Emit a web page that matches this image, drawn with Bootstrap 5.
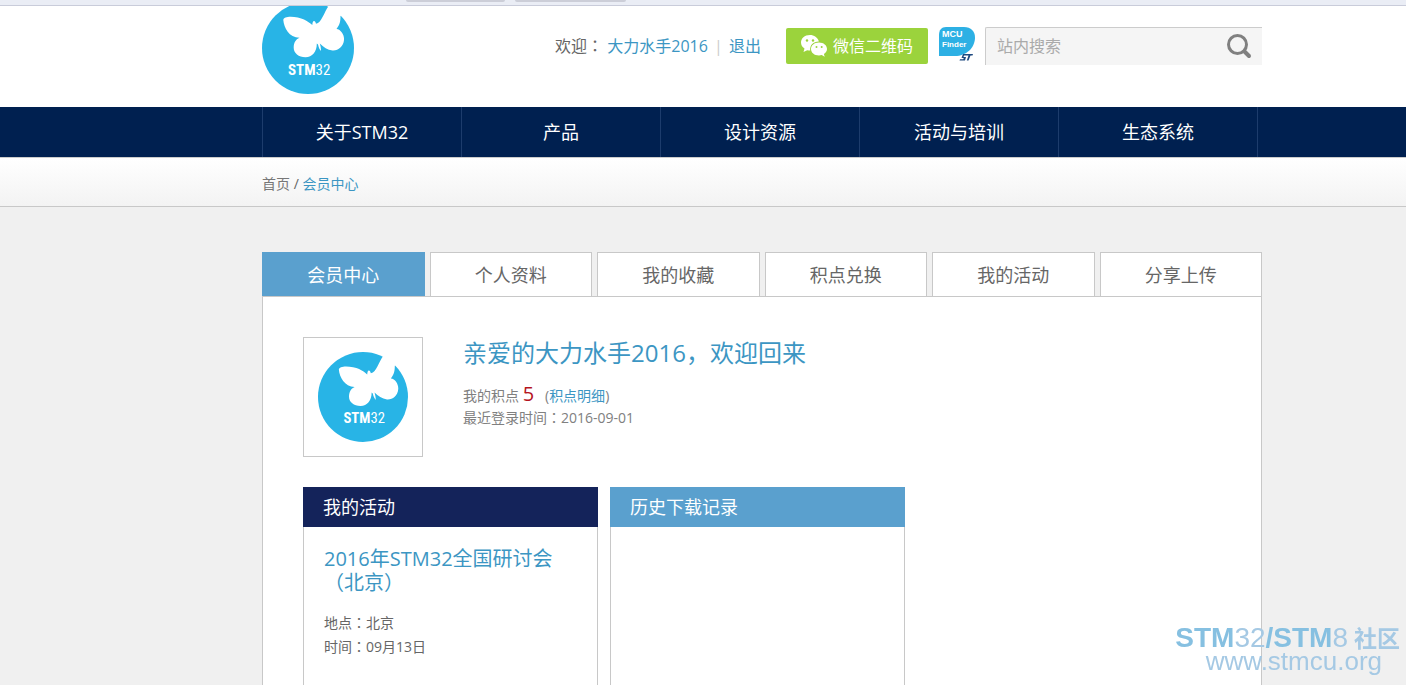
<!DOCTYPE html>
<html lang="zh-CN">
<head>
<meta charset="utf-8">
<meta name="viewport" content="width=device-width, initial-scale=1">
<title>会员中心 - STM32</title>
<link rel="stylesheet" href="https://cdn.jsdelivr.net/npm/bootstrap@5.3.0/dist/css/bootstrap.min.css">
<style>
  body { font-family: "Open Sans", "Noto Sans CJK SC", sans-serif; font-size: 14px; line-height: 22px; color: #666; background: #f0f0f0; }
  a { color: #3c96c3; text-decoration: none; }
  .punct { font-family: "Noto Sans CJK TC", sans-serif; line-height: 1; }
  .wrap { padding-left: 262px; padding-right: 144px; }
  .top-strip { height: 6px; background: #eaedf5; border-bottom: 1px solid #c9ccda; padding-left: 406px; gap: 10px; }
  .top-strip span { height: 2px; background: #ccced8; border-radius: 0 0 2px 2px; width: 99px; }
  .top-strip span + span { width: 111px; }
  .site-header { background: #fff; height: 101px; }
  .header-tools { padding-top: 21px; font-size: 16px; }
  .welcome .bar { color: #ccc; margin: 0 2px; }
  .btn-wechat { width: 142px; height: 36px; background: #9bd33c; color: #fff; font-size: 16px; border: 0; border-radius: 2px; padding: 0; margin-left: 25px; }
  .btn-wechat:hover { background: #8cc433; color: #fff; }
  .mcu { margin: 0 10px; padding-bottom: 2px; }
  .search-box { width: 277px; height: 38px; background: #f5f5f5; border-top: 1px solid #ccc; border-left: 1px solid #ccc; border-radius: 2px 0 0 0; padding: 0 9px 2px 11px; }
  .search-box input { background: transparent; border: 0; padding: 0; font-size: 16px; color: #666; box-shadow: none; }
  .search-box input:focus { background: transparent; box-shadow: none; }
  .search-box input::placeholder { color: #aaa; }
  .main-nav { background: #002050; }
  .main-nav ul { border-left: 1px solid #1d3c6c; margin-right: 4px; }
  .main-nav .nav-link { height: 50px; line-height: 50px; padding: 0; color: #fff; font-size: 18px; border-right: 1px solid #1d3c6c; }
  .crumbs { height: 50px; padding-top: 3px; background: linear-gradient(#fff, #f3f3f3); border-top: 1px solid #ccc; border-bottom: 1px solid #c8c8c8; }
  .crumbs a:first-child { color: #777; }
  .tabs { gap: 5px; padding-top: 45px; }
  .tabs .nav-link { height: 44px; line-height: 44px; padding: 0; border: 1px solid #c8c8c8; border-bottom: 0; border-radius: 0; background: #fff; color: #666; font-size: 18px; }
  .tabs .nav-link.active { background: #5aa0ce; border-color: #5aa0ce; color: #fff; }
  .panel { background: #fff; border: 1px solid #c8c8c8; border-bottom: 0; padding: 40px 40px 0; }
  .avatar { width: 120px; height: 120px; border: 1px solid #c8c8c8; }
  .profile { gap: 40px; color: #808080; }
  .profile h1 { font-size: 24px; line-height: 32px; color: #3c96c3; font-weight: 400; margin-bottom: 15px; }
  .points { font-size: 20px; line-height: 1; color: #b4141e; }
  .boxes { gap: 12px; padding-top: 30px; }
  .box { width: 295px; }
  .box h2 { height: 40px; line-height: 40px; font-size: 18px; font-weight: 400; color: #fff; padding-left: 20px; margin: 0; }
  .box-dark h2 { background: #14235a; }
  .box-light h2 { background: #5aa0ce; }
  .box-body { border: 1px solid #c8c8c8; border-width: 0 1px; padding: 20px; }
  .box h3 { font-size: 20px; line-height: 24px; font-weight: 400; margin-bottom: 16px; }
  .box p { line-height: 24px; margin: 0; }
  .watermark { right: 6px; bottom: 14px; font-family: "Liberation Sans", "Noto Sans CJK SC", sans-serif; font-size: 28px; line-height: 22px; color: #a5c9e4; pointer-events: none; white-space: nowrap; }
  .watermark b { color: #86c0e1; }
  .watermark .cjk { font-size: 23px; font-weight: 700; line-height: 1; margin-left: 6px; }
  .watermark .site { font-size: 26px; line-height: 20px; padding-right: 18px; }
</style>
</head>
<body class="min-vh-100 d-flex flex-column">
<svg class="d-none" aria-hidden="true">
  <symbol id="stm-logo" viewBox="0 0 92 92">
    <circle cx="46" cy="46" r="46" fill="#28b4e6"/>
    <path fill="#fff" d="M21.300 18C21.500 13 36 14.500 42 17.500C46 19.500 48.500 21.500 50.300 23C50.500 20.500 51 19 52 19C53 19 53.500 20 54 21.800C60 20.500 62 10 67 3.500L74-1L88 8L78.500 14C78.500 19 78 22.500 74.500 27C79 27.500 82.500 33 82 38C81.500 44.500 76 49 70.500 48.500C65.500 48 61.500 45 57.800 41.500C58.500 44 59 46 59 49C57.500 47.500 56.500 45 56 42.500L54.800 41.500C55 49 50.500 55.300 43.500 55.300C36.500 55.300 31.500 51 31.700 45.500C31.800 41 33.500 37.500 37.500 35.800C27 35.500 22 26 21.300 18Z"/>
    <text x="26" y="73" font-family="Liberation Sans Narrow, Roboto Condensed, Liberation Sans, sans-serif" font-size="15" fill="#fff"><tspan font-weight="700">STM</tspan><tspan>32</tspan></text>
  </symbol>
</svg>

<div class="top-strip d-flex"><span></span><span></span></div>
<header class="site-header wrap d-flex justify-content-between align-items-start">
  <a href="#" aria-label="STM32" class="d-block overflow-hidden"><svg class="d-block" width="92" height="88" viewBox="0 4 92 88"><use href="#stm-logo" width="92" height="92"/></svg></a>
  <div class="header-tools d-flex align-items-center">
    <div class="welcome text-nowrap">欢迎<span class="punct" lang="zh-TW">：</span> <a href="#">大力水手2016</a> <span class="bar">|</span> <a href="#">退出</a></div>
    <button type="button" class="btn btn-wechat d-flex align-items-center justify-content-center">
      <svg width="28" height="24" viewBox="1 0 28 24" class="me-1" aria-hidden="true">
        <path fill="#fff" d="M10 1C4.500 1 1 4.500 1 8.500c0 2.500 1.300 4.500 3.500 6L3.500 18l3.700-1.800c1.200.3 2 .4 3 .4C9.500 11 13.500 7.300 18.900 7.400C17.800 3.500 14 1 10 1Z"/>
        <path fill="#fff" d="M19 8.500c-4.700 0-8 2.900-8 6.500s3.300 6.500 8 6.500c1 0 1.900-.2 2.700-.4l3 1.600-.8-2.600c1.900-1.300 3.100-3.100 3.100-5.100C27 11.400 23.600 8.500 19 8.500Z"/>
        <g fill="#9bd33c"><circle cx="7" cy="6.500" r="1.200"/><circle cx="13" cy="6.500" r="1.200"/><circle cx="16.500" cy="13" r="1"/><circle cx="21.700" cy="13" r="1"/></g>
      </svg>微信二维码</button>
    <a href="#" class="mcu" aria-label="MCU Finder"><svg class="d-block" width="37" height="36" viewBox="0 0 37 36">
      <path fill="#2db0e4" d="M8 0H26C33 0 37 4.500 37 10.500C37 21 28 29 17 29H1V8C1 3 3.500 0 8 0Z"/>
      <text x="4" y="10" font-family="Liberation Sans, sans-serif" font-weight="700" font-size="9" fill="#fff">MCU</text>
      <text x="4" y="20" font-family="Liberation Sans, sans-serif" font-weight="700" font-size="8" fill="#fff">Finder</text>
      <path fill="#1e4a80" d="M25 27H35L34.500 28.500H32.500L30.500 33.500H28.800L30.500 28.500H26L25.500 30H28L27 33.500H21.500L22 32.200H25.300L25.700 31H23.500Z"/>
    </svg></a>
    <form class="search-box d-flex align-items-center" role="search">
      <input type="search" class="form-control" placeholder="站内搜索" aria-label="站内搜索">
      <button type="button" class="btn border-0 p-0" aria-label="搜索"><svg class="d-block" width="28" height="28" viewBox="0 0 28 28" fill="none" stroke="#808080" stroke-linecap="round"><circle cx="12.500" cy="12.500" r="9" stroke-width="3"/><path d="M19.500 19.500L24 24" stroke-width="4"/></svg></button>
    </form>
  </div>
</header>

<nav class="main-nav wrap" aria-label="主导航">
  <ul class="nav nav-fill flex-nowrap">
    <li class="nav-item w-100"><a class="nav-link" href="#">关于STM32</a></li>
    <li class="nav-item w-100"><a class="nav-link" href="#">产品</a></li>
    <li class="nav-item w-100"><a class="nav-link" href="#">设计资源</a></li>
    <li class="nav-item w-100"><a class="nav-link" href="#">活动与培训</a></li>
    <li class="nav-item w-100"><a class="nav-link" href="#">生态系统</a></li>
  </ul>
</nav>
<div class="crumbs wrap d-flex align-items-center"><div><a href="#">首页</a> / <a href="#">会员中心</a></div></div>

<main class="wrap flex-grow-1 d-flex flex-column">
  <ul class="nav tabs nav-fill flex-nowrap">
    <li class="nav-item w-100"><a class="nav-link active" aria-current="page" href="#">会员中心</a></li>
    <li class="nav-item w-100"><a class="nav-link" href="#">个人资料</a></li>
    <li class="nav-item w-100"><a class="nav-link" href="#">我的收藏</a></li>
    <li class="nav-item w-100"><a class="nav-link" href="#">积点兑换</a></li>
    <li class="nav-item w-100"><a class="nav-link" href="#">我的活动</a></li>
    <li class="nav-item w-100"><a class="nav-link" href="#">分享上传</a></li>
  </ul>
  <section class="panel flex-grow-1 d-flex flex-column">
    <div class="profile d-flex">
      <div class="avatar d-flex align-items-center justify-content-center"><svg width="90" height="90" role="img" aria-label="STM32"><use href="#stm-logo"/></svg></div>
      <div>
        <h1>亲爱的大力水手2016，欢迎回来</h1>
        <div>我的积点 <span class="points">5</span> &nbsp; (<a href="#">积点明细</a>)</div>
        <div>最近登录时间<span class="punct" lang="zh-TW">：</span>2016-09-01</div>
      </div>
    </div>
    <div class="boxes d-flex flex-grow-1">
      <section class="box box-dark d-flex flex-column">
        <h2>我的活动</h2>
        <div class="box-body flex-grow-1">
          <h3><a href="#">2016年STM32全国研讨会<span class="punct" lang="zh-TW">（</span>北京<span class="punct" lang="zh-TW">）</span></a></h3>
          <p>地点<span class="punct" lang="zh-TW">：</span>北京</p>
          <p>时间<span class="punct" lang="zh-TW">：</span>09月13日</p>
        </div>
      </section>
      <section class="box box-light d-flex flex-column">
        <h2>历史下载记录</h2>
        <div class="box-body flex-grow-1"></div>
      </section>
    </div>
  </section>
</main>

<div class="watermark position-fixed text-end">
  <div><b>STM</b>32<b>/STM</b>8<span class="cjk">社区</span></div>
  <div class="site">www.stmcu.org</div>
</div>
<script src="https://cdn.jsdelivr.net/npm/bootstrap@5.3.0/dist/js/bootstrap.bundle.min.js"></script>
</body>
</html>
